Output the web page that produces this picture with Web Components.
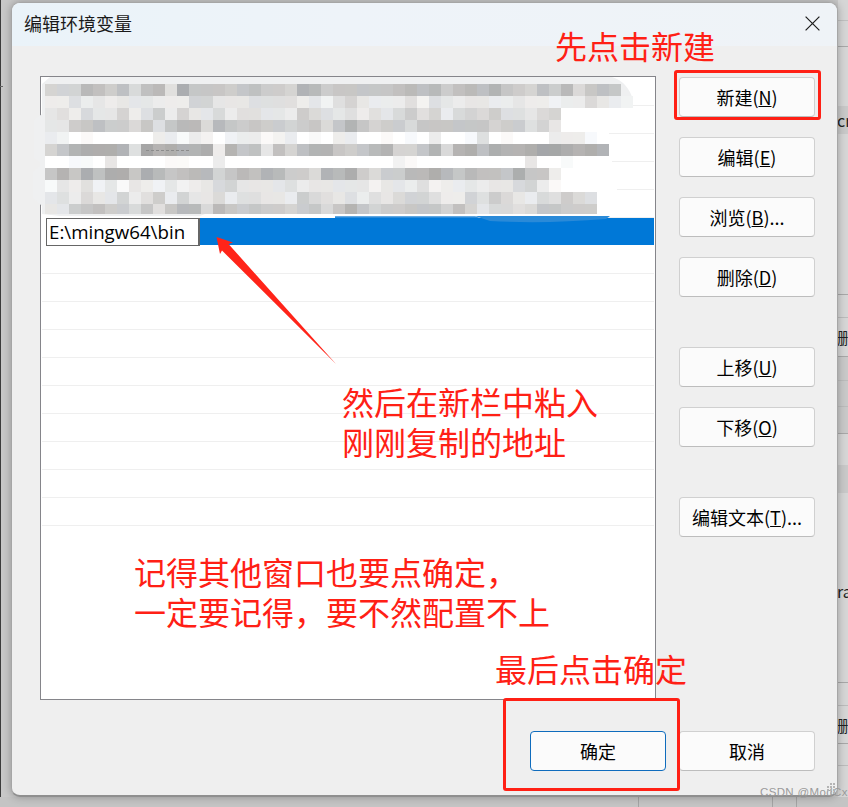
<!DOCTYPE html>
<html lang="zh">
<head>
<meta charset="utf-8">
<title>编辑环境变量</title>
<style>
html,body{margin:0;padding:0;width:848px;height:807px;overflow:hidden;background:#cfcfcf;font-family:"Noto Sans CJK SC",sans-serif}
</style>
</head>
<body>
<env-desktop>
  <env-window caption="编辑环境变量">
    <env-list slot="list">
      <env-row></env-row><env-row></env-row><env-row></env-row><env-row></env-row><env-row></env-row>
      <env-row selected>E:\mingw64\bin</env-row>
      <env-row></env-row><env-row></env-row><env-row></env-row><env-row></env-row><env-row></env-row>
      <env-row></env-row><env-row></env-row><env-row></env-row><env-row></env-row><env-row></env-row>
    </env-list>
    <env-button slot="side">新建(<u>N</u>)</env-button>
    <env-button slot="side">编辑(<u>E</u>)</env-button>
    <env-button slot="side">浏览(<u>B</u>)...</env-button>
    <env-button slot="side">删除(<u>D</u>)</env-button>
    <env-button slot="side" group>上移(<u>U</u>)</env-button>
    <env-button slot="side">下移(<u>O</u>)</env-button>
    <env-button slot="side" group>编辑文本(<u>T</u>)...</env-button>
    <env-button slot="foot" primary>确定</env-button>
    <env-button slot="foot">取消</env-button>
  </env-window>
  <env-mosaic></env-mosaic>
  <env-arrow></env-arrow>
  <env-frame style="left:674px;top:70px;width:147px;height:50px"></env-frame>
  <env-frame style="left:503px;top:698px;width:177px;height:93px"></env-frame>
  <env-note style="left:555px;top:25px">先点击新建</env-note>
  <env-note style="left:342px;top:381px">然后在新栏中粘入
刚刚复制的地址</env-note>
  <env-note style="left:134px;top:551px">记得其他窗口也要点确定，
一定要记得，要不然配置不上</env-note>
  <env-note style="left:495px;top:648px">最后点击确定</env-note>
  <env-mark>CSDN @ModCx</env-mark>
</env-desktop>
<script>
function shadow(el, html){ el.attachShadow({mode:'open'}).innerHTML = html; }

customElements.define('env-desktop', class extends HTMLElement{
  constructor(){super();shadow(this,`<style>
    :host{display:block;position:relative;width:848px;height:807px;overflow:hidden;
      background:linear-gradient(90deg,#3c3c3c 0 1px,#c8c8c8 1px 100%)}
    .strip{position:absolute;left:838px;top:0;width:10px;height:807px;background:#d6d6d6}
    .line{position:absolute;left:0;width:10px;height:1px;background:#a8a8a8}
    .band{position:absolute;left:0;width:10px;background:#c9c9c9}
    .frag{position:absolute;left:-1px;font:16px/20px "Noto Sans CJK SC",sans-serif;color:#222;white-space:nowrap}
    .bottom{position:absolute;left:0;top:797px;width:848px;height:10px;background:#c4c4c4}
    .v{position:absolute;top:0;width:1px;height:10px;background:#a4a4a4}
    .edge{position:absolute;left:0;top:86px;width:3px;height:1px;background:#666}
  </style>
  <div class="strip">
    <div class="line" style="top:20px;background:#c0c0c0"></div>
    <div class="line" style="top:46px"></div>
    <div class="band" style="top:106px;height:28px"></div>
    <div class="frag" style="top:110px">cr</div>
    <div class="line" style="top:294px"></div>
    <div class="line" style="top:317px;background:#bcbcbc"></div>
    <div class="frag" style="top:327px">删</div>
    <div class="line" style="top:356px"></div>
    <div class="band" style="top:357px;height:76px"></div>
    <div class="line" style="top:380px;background:#bcbcbc"></div>
    <div class="line" style="top:406px;background:#bcbcbc"></div>
    <div class="line" style="top:433px"></div>
    <div class="band" style="top:465px;height:28px"></div>
    <div class="frag" style="top:581px">ra</div>
    <div class="line" style="top:682px"></div>
    <div class="line" style="top:705px;background:#bcbcbc"></div>
    <div class="frag" style="top:715px">删</div>
    <div class="line" style="top:743px"></div>
    <div class="line" style="top:765px;background:#bcbcbc"></div>
  </div>
  <div class="bottom">
    <div class="v" style="left:638px"></div>
    <div class="v" style="left:772px"></div>
    <div class="v" style="left:796px"></div>
  </div>
  <div class="edge"></div>
  <slot></slot>`);}
});

customElements.define('env-window', class extends HTMLElement{
  constructor(){super();shadow(this,`<style>
    :host{display:flex;flex-direction:column;position:absolute;left:11px;top:2px;width:827px;height:795px;box-sizing:border-box;
      border:1px solid #a6a6a6;border-bottom:2px solid #8f8f8f;border-radius:9px;background:#efefef;overflow:hidden;
      box-shadow:0 0 8px rgba(0,0,0,.28)}
    header{box-sizing:border-box;height:43px;flex:none;display:flex;align-items:center;justify-content:space-between;padding:0 17px 3px 12px;
      background:linear-gradient(90deg,#eaf3f9,#eef3f9 40%,#eff3f7)}
    .cap{font:18px/24px "Noto Sans CJK SC",sans-serif;color:#1a1a1a}
    svg{display:block}
    main{flex:1;display:grid;grid-template-columns:616px 136px;column-gap:23px;padding:30px 22px 25px 28px;align-content:start}
    .side{display:flex;flex-direction:column;gap:20px;padding-top:1px}
    .foot{grid-column:1 / 3;display:flex;justify-content:flex-end;gap:13px;margin-top:31px}
  </style>
  <header><span class="cap"></span>
    <svg width="15" height="15" viewBox="0 0 15 15"><path d="M.6.6 14.4 14.4M14.4.6.6 14.4" stroke="#222" stroke-width="1.25" fill="none"/></svg>
  </header>
  <main>
    <slot name="list"></slot>
    <div class="side"><slot name="side"></slot></div>
    <div class="foot"><slot name="foot"></slot></div>
  </main>`);
  this.shadowRoot.querySelector('.cap').textContent=this.getAttribute('caption');}
});

customElements.define('env-list', class extends HTMLElement{
  constructor(){super();shadow(this,`<style>
    :host{display:flex;flex-direction:column;box-sizing:border-box;width:616px;height:624px;
      border:1px solid #85858a;background:#fff;padding:1px 1px 0 1px}
  </style><slot></slot>`);}
});

customElements.define('env-row', class extends HTMLElement{
  constructor(){super();
    const sel=this.hasAttribute('selected');
    shadow(this,`<style>
    :host{display:flex;box-sizing:border-box;height:28px;flex:none;background:#fff;${sel?'':'border-bottom:1px solid #efefef;'}}
    .gap{width:4px;flex:none}
    .input{box-sizing:border-box;width:154px;height:28px;border:1px solid #666;border-right-width:2px;background:#fff;flex:none;
      padding-left:2px;font:18.7px/25px "Open Sans",sans-serif;color:#000;white-space:nowrap;overflow:hidden}
    .fill{flex:1;height:27px;background:#0078d7}
    </style>${sel?'<div class="gap"></div><div class="input"><slot></slot></div><div class="fill"></div>':''}`);}
});

customElements.define('env-button', class extends HTMLElement{
  constructor(){super();
    const p=this.hasAttribute('primary');
    shadow(this,`<style>
    :host{display:flex;align-items:center;justify-content:center;box-sizing:border-box;width:136px;height:40px;flex:none;padding-bottom:1px;
      border:1px solid ${p?'#0f6cbd':'#d0d0d0'};border-bottom-color:${p?'#0f6cbd':'#bdbdbd'};border-radius:4px;background:#fbfbfb;
      font:18px/24px "Noto Sans CJK SC",sans-serif;color:#000;white-space:nowrap}
    :host([group]){margin-top:30px}
    </style><slot></slot>`);}
});

customElements.define('env-mosaic', class extends HTMLElement{
  constructor(){super();
    const rows=[
      "8884575954a26667"+"65778347666665454"+"754536785749656",
      "ccacbcbbbccc88bb"+"baaaacbda8bcccada"+"bcbbccbccdcc9bcd",
      "bac9bb8ca7c8bb9c"+"aabbc79abacab97a8"+"c9897aab98",
      "bb7657796a644946"+"76778769636877966"+"6666877a8b",
      "cdfefffffccecdfd"+"ccedcfefccffefefc"+"ffeafefffccce f".replace(' ','').slice(0,14),
      "8632223a132332c3"+"65b58533676438863"+"93252332112323",
      "ffeefbffffeeffcf"+"fffffffffffffdeff"+"fffffffbffefff",
      "6362522624654486"+"45347793427977442"+"4645562 66c".replace(' ',''),
      "ebcadbebcdbdcb98"+"bbbbacbbbbbdbbcad"+"ccbcbb98ce",
      "bac9bb8ca7c8bb9c"+"aabbc79abacab988a"+"cc8a79bc9a79a",
      "bb7657796a644946"+"76778769636877666"+"858b99a966777"
    ];
    const scale=c=>{const v=parseInt(c,16);return Math.round(160+v*6.33);};
    let r='';
    rows.forEach((s,y)=>{
      for(let x=0;x<s.length;x++){
        const g=scale(s[x]);
        const h=(x*7+y*13)%5;
        const t=g>=252?[0,0,0]:[[2,1,-1],[0,0,0],[-2,0,3],[2,0,-1],[-1,1,1]][h];
        const col=`rgb(${g+t[0]},${g+t[1]},${Math.min(255,g+t[2])})`;
        const H=y===10?10:12;
        r+=`<rect x="${45+x*12}" y="${84+y*12}" width="12" height="${H}" fill="${col}"/>`;
      }
    });
    shadow(this,`<style>
    :host{display:block;position:absolute;left:0;top:0;width:848px;height:807px;pointer-events:none}
    svg{display:block;position:absolute;left:0;top:0}
    </style>
    <svg width="848" height="807" viewBox="0 0 848 807">
      <path d="M42 106H636V133H608V161H612V189H617V215H42Z" fill="#fff"/>
      <path d="M50 77H612Q628 82 633 100V108H561V214H205L200 216H60L42 214V206L33 198V172L40 166V162L34 158V120L42 114V84Z" fill="#eff0f1"/>
      <path d="M42 216H335V218H42Z" fill="#fff"/>
      <path d="M335 216.2H475L480 218H335Z" fill="#2a8ad8"/>
      <path d="M475 216H610L606 219Q545 224 490 221Z" fill="#2a8ad8"/>
      <g shape-rendering="crispEdges">${r}</g>
      <path d="M146 150.5H190" stroke="#8b8b8b" stroke-dasharray="3 2" stroke-width="1"/>
    </svg>`);}
});

customElements.define('env-arrow', class extends HTMLElement{
  constructor(){super();shadow(this,`<style>
    :host{display:block;position:absolute;left:210px;top:232px;width:130px;height:136px;pointer-events:none}
    svg{display:block}
    </style><svg width="130" height="136" viewBox="210 232 130 136"><path d="M216.5 237 233 242.5 228.5 244 336 364 222 250.5 220 254Z" fill="#ff2419"/></svg>`);}
});

customElements.define('env-frame', class extends HTMLElement{
  constructor(){super();shadow(this,`<style>
    :host{display:block;position:absolute;box-sizing:border-box;border:3px solid #ff2015;border-radius:3px;pointer-events:none}
    </style>`);}
});

customElements.define('env-note', class extends HTMLElement{
  constructor(){super();shadow(this,`<style>
    :host{display:block;position:absolute;font:32px/40px "Noto Sans CJK SC",sans-serif;color:#ff2015;white-space:pre;pointer-events:none}
    </style><slot></slot>`);}
});

customElements.define('env-mark', class extends HTMLElement{
  constructor(){super();shadow(this,`<style>
    :host{display:block;position:absolute;left:760px;top:785px;font:11.5px/14px "Liberation Sans",sans-serif;letter-spacing:.35px;color:#9a9a9a;white-space:nowrap;pointer-events:none}
    i{position:absolute;width:2px;height:2px;background:#b4b4b4}
    </style><slot></slot>
    <i style="left:70px;top:-2px"></i><i style="left:73px;top:-2px"></i>
    <i style="left:67px;top:1px"></i><i style="left:70px;top:1px"></i><i style="left:73px;top:1px"></i>
    <i style="left:67px;top:4px"></i><i style="left:70px;top:4px"></i><i style="left:73px;top:4px"></i>
    <i style="left:70px;top:7px"></i><i style="left:73px;top:7px"></i>`);}
});
</script>
</body>
</html>
